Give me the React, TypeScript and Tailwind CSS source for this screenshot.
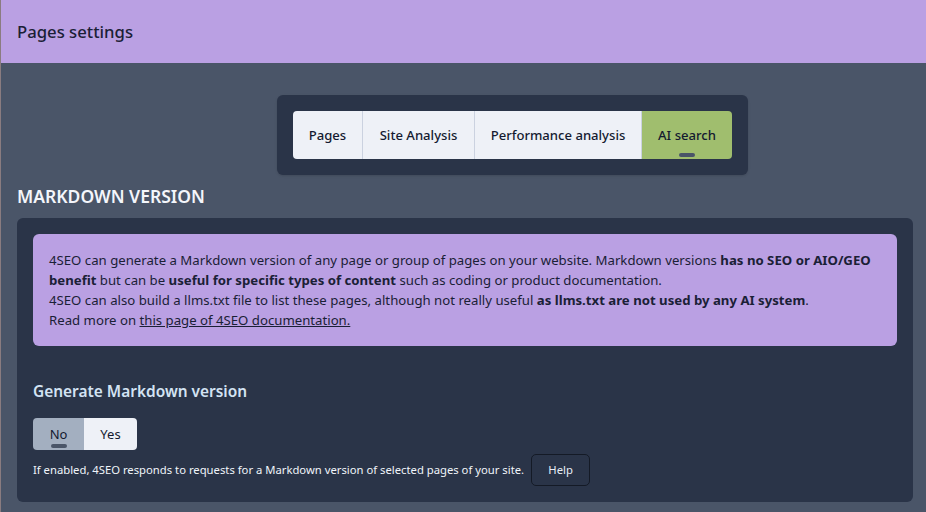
export default function App() {
  const font = { fontFamily: '"Noto Sans", sans-serif' };
  return (
    <div style={font} className="w-[926px] h-[512px] overflow-hidden bg-[#8a7c80] pl-px flex flex-col text-[#1a202c]">
      <header className="h-[63px] shrink-0 bg-[#baa0e3] flex items-center pl-4 text-[16.7px] font-medium text-[#1a2036]">
        Pages settings
      </header>
      <div className="flex-1 bg-[#4a5568]">
        <div className="flex pt-8 pl-[276px]">
          <div className="bg-[#2a3448] rounded-md p-4 shadow">
            <div className="flex h-12 rounded overflow-hidden text-[13.1px] font-medium text-[#141a30]">
              <div className="relative flex items-center justify-center w-[70px] bg-[#eef1f7] border-r border-[#cbd2e0] pt-[2px]">Pages</div>
              <div className="relative flex items-center justify-center w-[112px] bg-[#eef1f7] border-r border-[#cbd2e0] pt-[2px]">Site Analysis</div>
              <div className="relative flex items-center justify-center w-[167px] bg-[#eef1f7] border-r border-[#cbd2e0] pt-[2px]">Performance analysis</div>
              <div className="relative flex items-center justify-center w-[90px] bg-[#a0be6e] pt-[2px]">
                AI search
                <span className="absolute bottom-0.5 left-1/2 -translate-x-1/2 w-4 h-1 rounded-full bg-[#4a5568]" />
              </div>
            </div>
          </div>
        </div>
        <div className="pl-4 pr-3 pt-2.5">
          <h2 className="text-[17.5px] leading-5 font-semibold text-[#f4f6fb] pt-[1px]">MARKDOWN VERSION</h2>
          <div className="mt-3 w-[896px] h-[284px] bg-[#2a3448] rounded-md p-4">
            <div className="bg-[#baa0e3] rounded-md p-4 h-[112px] text-[13.2px] leading-5 text-[#1a2036]">
              4SEO can generate a Markdown version of any page or group of pages on your website. Markdown versions <b>has no SEO or AIO/GEO benefit</b> but can be <b>useful for specific types of content</b> such as coding or product documentation.
              <br />
              4SEO can also build a llms.txt file to list these pages, although not really useful <b>as llms.txt are not used by any AI system</b>.
              <br />
              Read more on <a className="underline">this page of 4SEO documentation.</a>
            </div>
            <div className="mt-[35px] text-[15.45px] leading-5 font-semibold text-[#d3e3f3]">Generate Markdown version</div>
            <div className="mt-[17px] flex w-[104px] h-8 rounded overflow-hidden text-[13px] text-[#141a30]">
              <div className="relative w-[51px] flex items-center justify-center bg-[#a3afc0] pt-[2px]">
                No
                <span className="absolute bottom-0.5 left-1/2 -translate-x-1/2 w-4 h-1 rounded-full bg-[#4a5568]" />
              </div>
              <div className="flex-1 flex items-center justify-center bg-[#eef1f7] pt-[2px]">Yes</div>
            </div>
            <div className="mt-1 flex items-center gap-[7px] text-[11.28px] text-[#f0f4fa]">
              <span>If enabled, 4SEO responds to requests for a Markdown version of selected pages of your site.</span>
              <button className="w-[59px] h-8 rounded-[5px] border border-[#141a26] text-[#e6edf6]">Help</button>
            </div>
          </div>
        </div>
      </div>
    </div>
  );
}
